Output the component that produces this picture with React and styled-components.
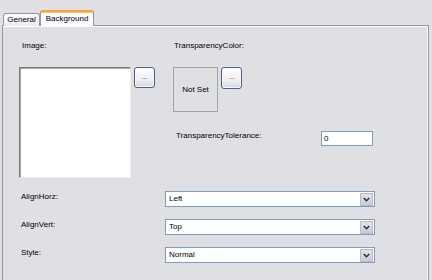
import React from "react";
import styled, { createGlobalStyle } from "styled-components";

const GlobalStyle = createGlobalStyle`
  html, body {
    margin: 0;
    background: #e0dfe3;
    overflow: hidden;
  }
  body {
    font-family: "Liberation Sans", Arial, sans-serif;
    font-size: 8px;
    color: #000;
  }
`;

const Window = styled.div`
  width: 432px;
  height: 280px;
  box-sizing: border-box;
  padding: 10px 0 0 2px;
`;

const TabStrip = styled.div`
  display: flex;
  align-items: flex-end;
  height: 16px;
  padding-left: 1px;
  margin-bottom: -1px;
  position: relative;
  z-index: 1;
`;

const Tab = styled.div`
  box-sizing: border-box;
  width: ${p => (p.$active ? "54px" : "37px")};
  height: ${p => (p.$active ? "16px" : "13px")};
  border: 1px solid #919b9c;
  border-bottom: none;
  border-top: ${p => (p.$active ? "2px solid #f1a63a" : "1px solid #919b9c")};
  border-radius: 3px 3px 0 0;
  background: ${p =>
    p.$active ? "#fcfcfe" : "linear-gradient(#fdfdfd, #ecebf0)"};
  display: flex;
  align-items: center;
  justify-content: center;
  padding-bottom: ${p => (p.$active ? "1px" : "0")};
  line-height: 10px;
  ${p => p.$active && "box-shadow: inset 0 1px #fcc660;"}
`;

const Panel = styled.div`
  box-sizing: border-box;
  width: 427px;
  height: 262px;
  border: 1px solid #919b9c;
  box-shadow: inset 0 1px #fbfbfc, inset -1px 0 #fbfbfc;
  background: #e0dfe3;
`;

const TopSection = styled.div`
  display: flex;
  padding: 13px 0 0 16px;
`;

const Column = styled.div`
  display: flex;
  flex-direction: column;
  width: ${p => p.$width || "auto"};
  margin-right: ${p => p.$gap || "0"};
`;

const Label = styled.div`
  line-height: 13px;
  padding-left: ${p => p.$indent || "0"};
  margin-top: ${p => p.$lift || "0"};
  width: ${p => p.$width || "auto"};
  white-space: nowrap;
`;

const PickRow = styled.div`
  display: flex;
  align-items: flex-start;
  margin-top: ${p => p.$top || "15px"};
`;

const ImageBox = styled.div`
  box-sizing: border-box;
  width: 112px;
  height: 111px;
  background: #fff;
  border: 1px solid;
  border-color: #7c7c7c #f1efe2 #f1efe2 #7c7c7c;
  box-shadow: inset 1px 1px #aca899;
`;

const ColorBox = styled.div`
  box-sizing: border-box;
  width: 45px;
  height: 45px;
  border: 1px solid #a3a3a6;
  display: flex;
  align-items: center;
  justify-content: center;
`;

const BrowseButton = styled.div`
  box-sizing: border-box;
  width: 21px;
  height: ${p => p.$tall ? "22px" : "21px"};
  margin-left: 3px;
  border: 1px solid #4d6185;
  border-radius: 3px;
  background: linear-gradient(#ffffff, #f0f0f4 60%, #d8d8e2);
  box-shadow: inset 0 0 0 1px #f4f6fb;
  display: flex;
  align-items: center;
  justify-content: center;
  color: #6a3c78;
  font-size: 8px;
  line-height: 8px;
  padding-bottom: 2px;
`;

const ToleranceRow = styled.div`
  display: flex;
  align-items: flex-start;
  margin-top: 19px;
`;

const TextInput = styled.div`
  box-sizing: border-box;
  width: 52px;
  height: 15px;
  background: #fff;
  border: 1px solid #7f9db9;
  padding-left: 2px;
  line-height: 13px;
`;

const FieldGrid = styled.div`
  display: grid;
  grid-template-columns: 144px 210px;
  row-gap: 12px;
  align-items: start;
  margin-top: 13px;
  padding-left: 18px;
`;

const Combo = styled.div`
  box-sizing: border-box;
  height: 16px;
  border: 1px solid #7f9db9;
  background: #fff;
  display: flex;
  align-items: center;
  padding: 1px;
`;

const ComboValue = styled.div`
  flex: 1;
  padding-left: 2px;
  line-height: 12px;
`;

const DropButton = styled.div`
  box-sizing: border-box;
  width: 13px;
  height: 13px;
  border: 1px solid #b8bccb;
  background: linear-gradient(#e4e3ea, #cbcad6);
  display: flex;
  align-items: center;
  justify-content: center;
`;

const Chevron = () => (
  <svg width="7" height="5" viewBox="0 0 7 5">
    <path d="M0.8 1 L3.5 3.7 L6.2 1" fill="none" stroke="#2a2a32" strokeWidth="1.4" />
  </svg>
);

const fields = [
  { label: "AlignHorz:", value: "Left" },
  { label: "AlignVert:", value: "Top" },
  { label: "Style:", value: "Normal" },
];

const App = () => {
  return (
    <Window>
      <GlobalStyle />
      <TabStrip>
        <Tab>General</Tab>
        <Tab $active>Background</Tab>
      </TabStrip>
      <Panel>
        <TopSection>
          <Column $width="136px" $gap="18px">
            <Label $indent="3px">Image:</Label>
            <PickRow>
              <ImageBox />
              <BrowseButton>...</BrowseButton>
            </PickRow>
          </Column>
          <Column>
            <Label $indent="1px">TransparencyColor:</Label>
            <PickRow>
              <ColorBox>Not Set</ColorBox>
              <BrowseButton $tall>...</BrowseButton>
            </PickRow>
            <ToleranceRow>
              <Label $indent="3px" $width="145px" $lift="-2px">
                TransparencyTolerance:
              </Label>
              <TextInput>0</TextInput>
            </ToleranceRow>
          </Column>
        </TopSection>
        <FieldGrid>
          {fields.map(f => (
            <React.Fragment key={f.label}>
              <Label $lift="-1px">{f.label}</Label>
              <Combo>
                <ComboValue>{f.value}</ComboValue>
                <DropButton>
                  <Chevron />
                </DropButton>
              </Combo>
            </React.Fragment>
          ))}
        </FieldGrid>
      </Panel>
    </Window>
  );
};

export default App;
